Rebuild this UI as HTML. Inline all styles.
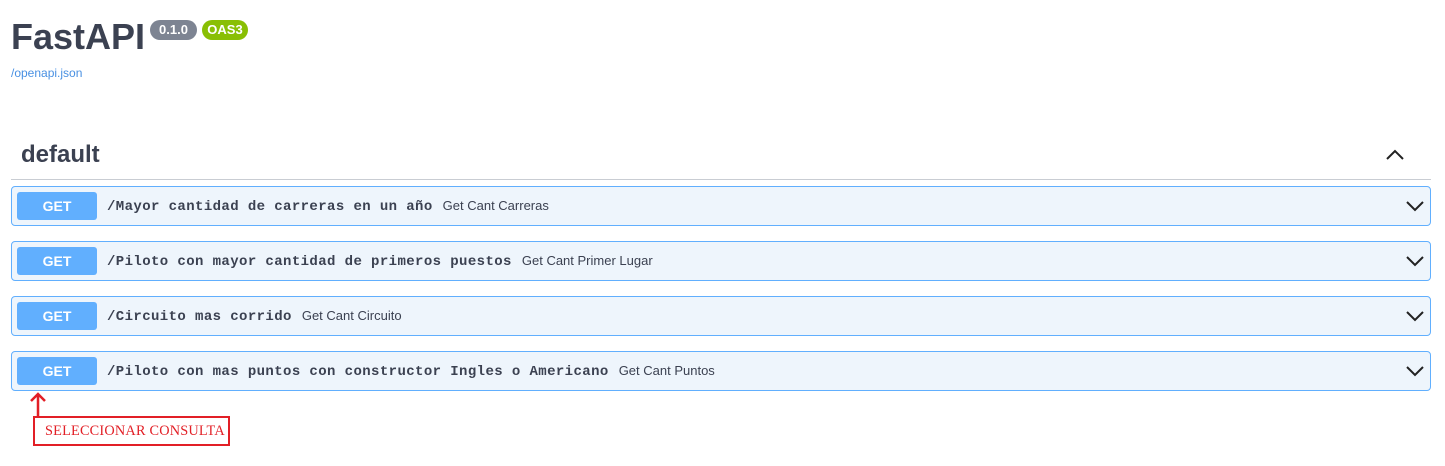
<!DOCTYPE html>
<html><head><meta charset="utf-8"><style>
*{box-sizing:border-box;margin:0;padding:0}
body{width:1445px;height:466px;background:#fff;font-family:"Liberation Sans",sans-serif;position:relative;overflow:hidden;color:#3b4151}
.title{position:absolute;left:11px;top:16px;font-size:36px;font-weight:bold;color:#3b4151;letter-spacing:0}
.badge{position:absolute;top:20px;height:20px;border-radius:10px;color:#fff;font-weight:bold;font-size:13px;line-height:20px;text-align:center}
.link{position:absolute;left:11px;top:66px;font-size:12px;color:#4990e2}
.def{position:absolute;left:21px;top:141px;font-size:24px;font-weight:bold;color:#3b4151}
.hr{position:absolute;left:11px;width:1420px;top:179px;height:1px;background:#c9cdd3}
.row{position:absolute;left:11px;width:1420px;height:40px;border:1px solid #61affe;border-radius:4px;background:#eef5fc}
.get{position:absolute;left:5px;top:5px;width:80px;height:28px;background:#61affe;border-radius:3px;color:#fff;font-weight:bold;font-size:14px;line-height:28px;text-align:center}
.path{position:absolute;left:95px;top:11px;font-family:"Liberation Mono",monospace;font-weight:bold;font-size:14px;letter-spacing:0.4px;color:#3b4151;white-space:nowrap}
.path span{font-family:"Liberation Sans",sans-serif;font-weight:normal;font-size:13px;margin-left:10px;letter-spacing:0}
.chev{position:absolute;right:5px;top:12px}
.box{position:absolute;left:33px;top:416px;width:197px;height:30px;border:2px solid #e21f26;color:#e21f26;font-family:"Liberation Serif",serif;font-size:14.3px;line-height:26px;padding-left:10px;letter-spacing:.2px}
</style></head><body>
<div class="title">FastAPI</div>
<div class="badge" style="left:150px;width:47px;background:#7d8492">0.1.0</div>
<div class="badge" style="left:202px;width:46px;background:#89bf04">OAS3</div>
<div class="link">/openapi.json</div>
<div class="def">default</div>
<svg style="position:absolute;left:1385px;top:147px" width="20" height="14"><path d="M2 12 L10 4 L18 12" fill="none" stroke="#222" stroke-width="2"/></svg>
<div class="hr"></div>

<div class="row" style="top:186px"><div class="get">GET</div><div class="path">/Mayor cantidad de carreras en un año<span>Get Cant Carreras</span></div><svg class="chev" width="20" height="14"><path d="M2 3 L10 11 L18 3" fill="none" stroke="#222" stroke-width="2"/></svg></div>
<div class="row" style="top:241px"><div class="get">GET</div><div class="path">/Piloto con mayor cantidad de primeros puestos<span>Get Cant Primer Lugar</span></div><svg class="chev" width="20" height="14"><path d="M2 3 L10 11 L18 3" fill="none" stroke="#222" stroke-width="2"/></svg></div>
<div class="row" style="top:296px"><div class="get">GET</div><div class="path">/Circuito mas corrido<span>Get Cant Circuito</span></div><svg class="chev" width="20" height="14"><path d="M2 3 L10 11 L18 3" fill="none" stroke="#222" stroke-width="2"/></svg></div>
<div class="row" style="top:351px"><div class="get">GET</div><div class="path">/Piloto con mas puntos con constructor Ingles o Americano<span>Get Cant Puntos</span></div><svg class="chev" width="20" height="14"><path d="M2 3 L10 11 L18 3" fill="none" stroke="#222" stroke-width="2"/></svg></div>

<svg style="position:absolute;left:28px;top:391px" width="22" height="26"><path d="M10 25 L10 3 M3 10 L10 3 L17 10" fill="none" stroke="#e21f26" stroke-width="2.5"/></svg>
<div class="box">SELECCIONAR CONSULTA</div>
</body></html>
